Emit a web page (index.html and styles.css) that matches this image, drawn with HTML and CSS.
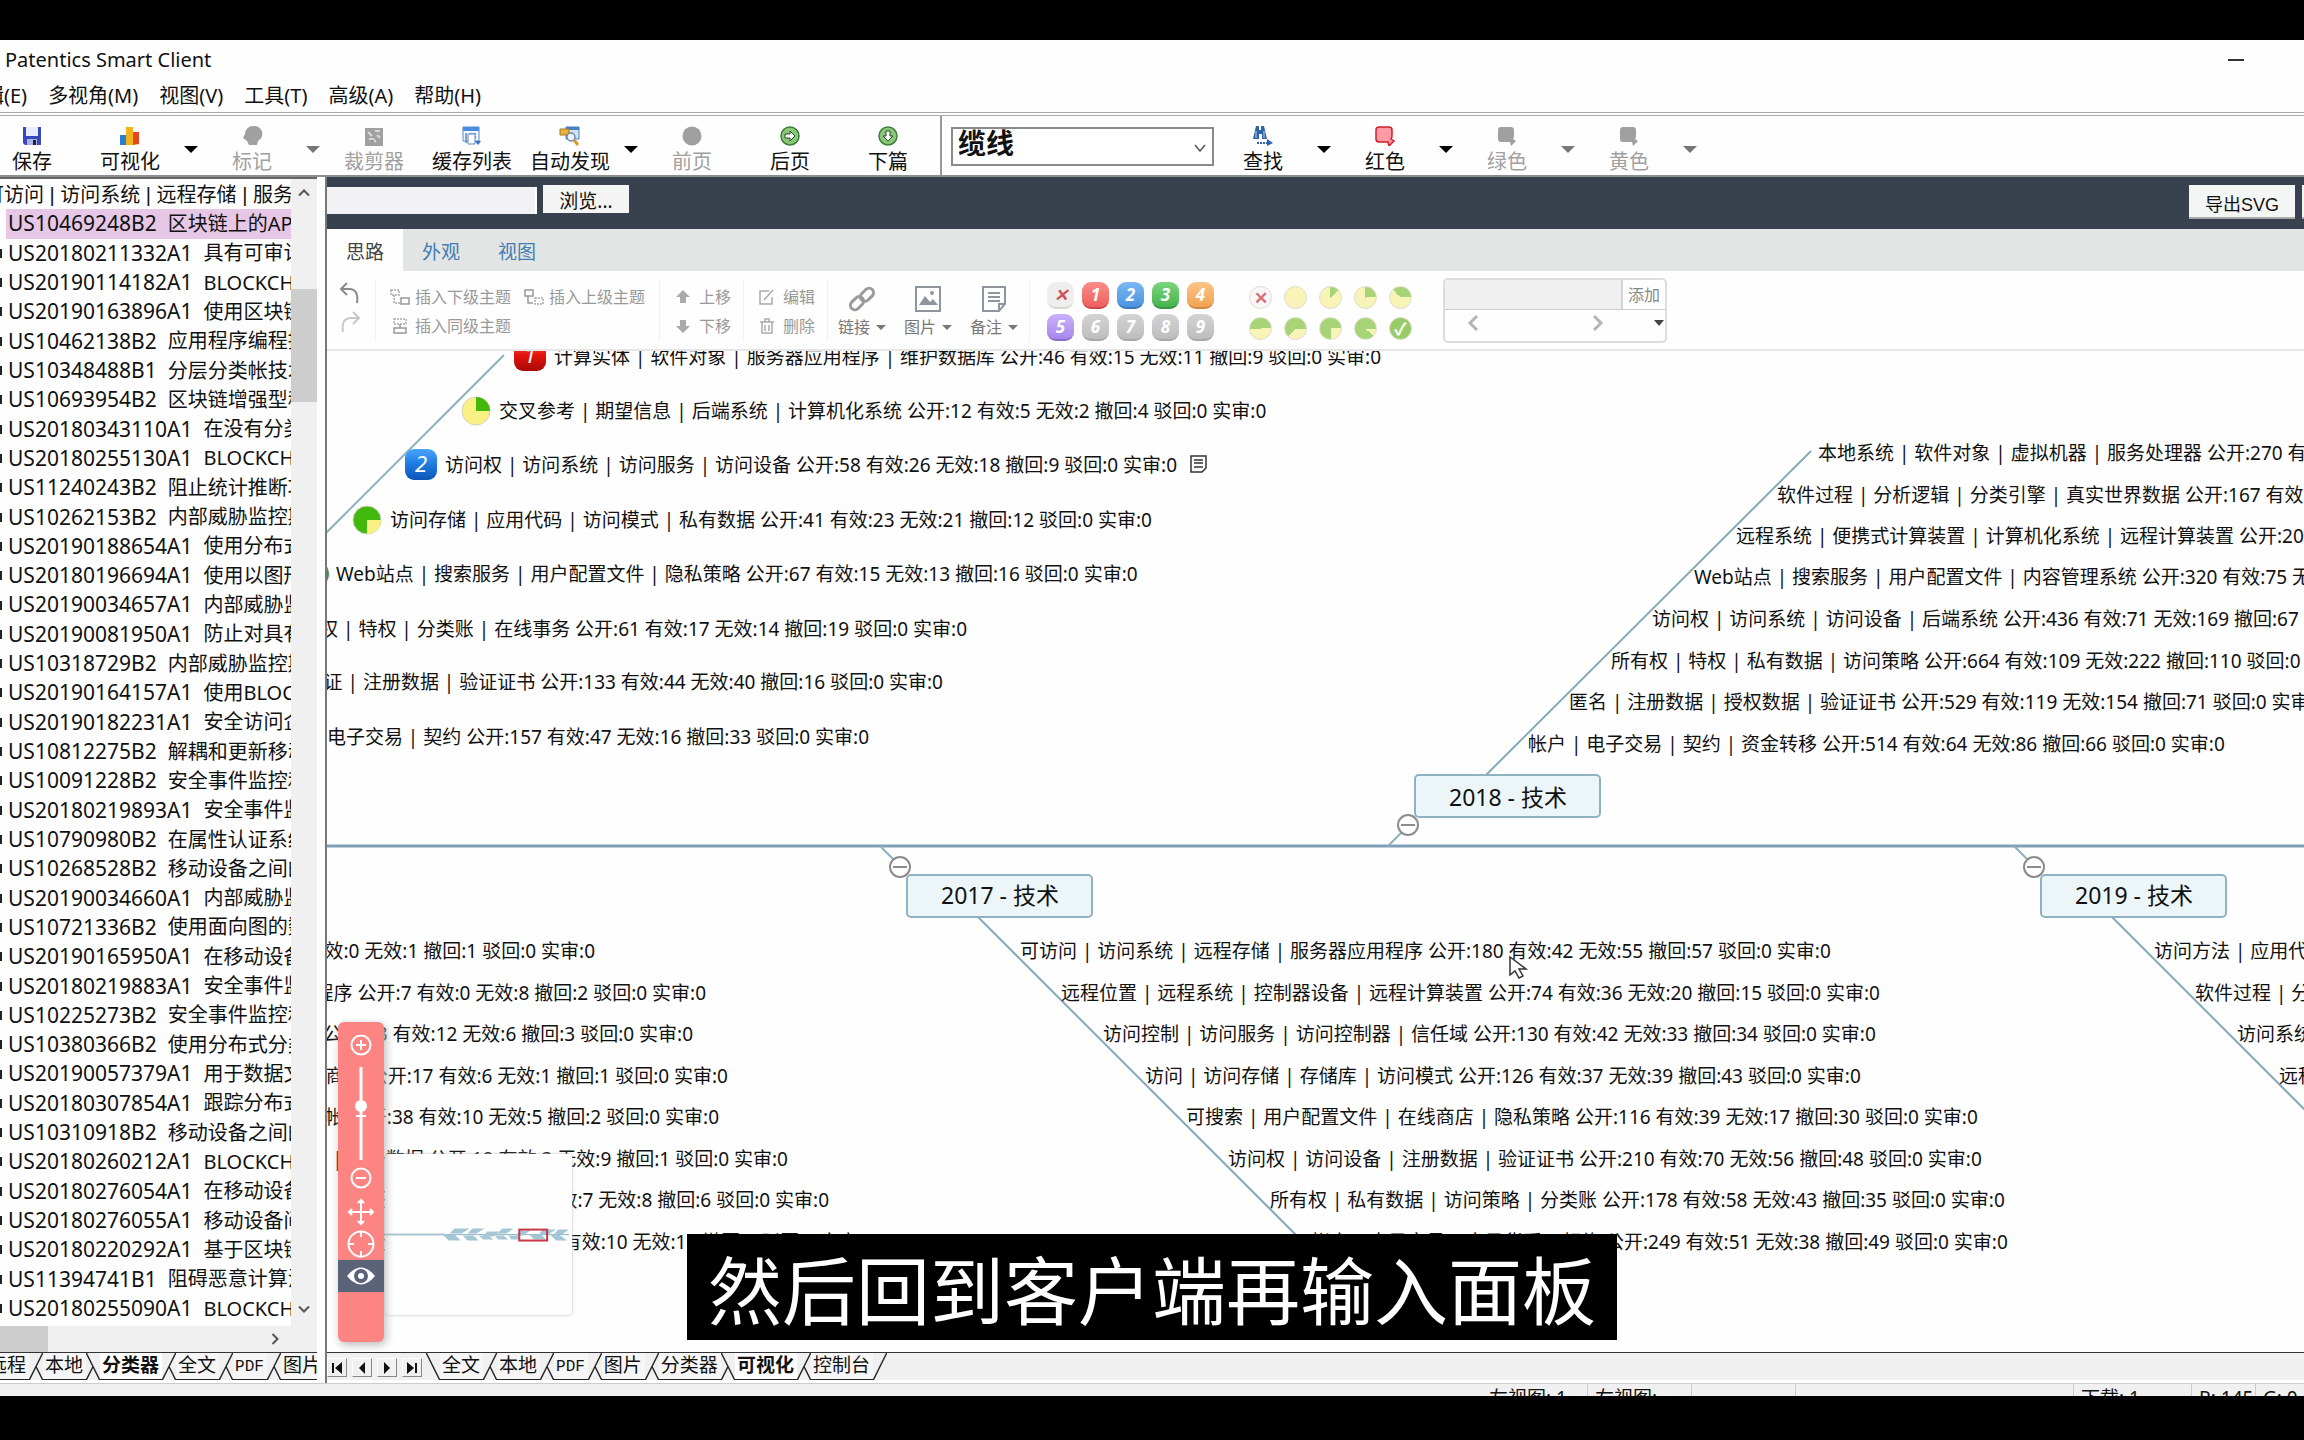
FILE: index.html
```html
<!DOCTYPE html>
<html lang="zh-CN">
<head>
<meta charset="utf-8">
<title>Patentics Smart Client</title>
<link rel="stylesheet" href="styles.css">
</head>
<body>
<svg class="defs" aria-hidden="true">
  <defs>
    <linearGradient id="gBlue" x1="0" y1="0" x2="0" y2="1"><stop offset="0" stop-color="#4aa3ff"/><stop offset=".5" stop-color="#1d7ae0"/><stop offset="1" stop-color="#0b57b5"/></linearGradient>
    <linearGradient id="gRed" x1="0" y1="0" x2="0" y2="1"><stop offset="0" stop-color="#ff5a4a"/><stop offset=".5" stop-color="#e3120b"/><stop offset="1" stop-color="#a80a08"/></linearGradient>
    <symbol id="speech" viewBox="0 0 20 20"><path d="M4 1h10q3 0 3 3v6q0 2-1 3l3 2-5 5-1-4H4q-3 0-3-3V4q0-3 3-3z"/></symbol>
    <symbol id="minus" viewBox="-11 -11 22 22"><circle r="10" fill="#fff" stroke="#8c8c8c" stroke-width="2"/><path d="M-7 0H7" stroke="#8c8c8c" stroke-width="2"/></symbol>
  </defs>
</svg>

<div class="app">
  <header class="titlebar">
    <h1>Patentics Smart Client</h1>
    <button class="minimize" aria-label="最小化"></button>
  </header>

  <nav class="menubar">
    <button>编辑(E)</button><button>多视角(M)</button><button>视图(V)</button><button>工具(T)</button><button>高级(A)</button><button>帮助(H)</button>
  </nav>

  <div class="toolbar">
    <button class="tool"><svg viewBox="0 0 20 20"><path d="M1 1h18v18H3l-2-2z" fill="#3a49b8"/><path d="M4 1h12v9H4z" fill="#e8ecff"/><path d="M5 13h10v6H5z" fill="#aab4e8"/><path d="M11 14h3v5h-3z" fill="#223"/></svg>保存</button>
    <button class="tool"><svg viewBox="0 0 20 20"><path d="M0 9h6v10H0z" fill="#2a7fd0"/><path d="M6 1h7v18H6z" fill="#f4b21c"/><path d="M13 6h6v12l-6 1z" fill="#e2481c"/></svg>可视化</button>
    <button class="drop" aria-label="可视化选项"></button>
    <button class="tool" disabled><svg viewBox="0 0 20 20"><path d="M11 0a8 8 0 0 1 5 15l-1 4H7l-2-4-4-3 2-4a8 8 0 0 1 8-8z" fill="#a0a0a0"/></svg>标记</button>
    <button class="drop" disabled aria-label="标记选项"></button>
    <button class="tool" disabled><svg viewBox="0 0 20 20"><path d="M1 2h18v18H1z" fill="#a0a0a0"/><path d="M4 6l4 4M11 5h5M5 13h4l3 3M13 9l3 3" stroke="#d8d8d8" stroke-width="2"/></svg>裁剪器</button>
    <button class="tool"><svg viewBox="0 0 20 20"><path d="M1 1h16v14H1z" fill="#f2f7ff" stroke="#5b86c8"/><path d="M1 1h16v4H1z" fill="#4b8ce0"/><path d="M4 7v10M7 8h7M7 11h7M7 14h6" stroke="#5b86c8" stroke-width="1.5"/><path d="M13 15h6l-3 4z" fill="#2b6fd0"/><path d="M6 8h7v10H6z" fill="#fff" stroke="#5b86c8"/></svg>缓存列表</button>
    <button class="tool"><svg viewBox="0 0 20 20"><path d="M6 1h13v12H6z" fill="#cfe3fa" stroke="#4b7fc4"/><path d="M6 1h13v3H6z" fill="#4b7fc4"/><path d="M0 3h9v6H0z" fill="#e8b23c" stroke="#a8761c"/><circle cx="11" cy="11" r="4" fill="#eaf4ff" stroke="#7088a8" stroke-width="1.5"/><path d="M14 14l4 5" stroke="#d89a28" stroke-width="3"/></svg>自动发现</button>
    <button class="drop" aria-label="自动发现选项"></button>
    <button class="tool" disabled><svg viewBox="0 0 20 20"><circle cx="10" cy="10" r="9.500" fill="#a0a0a0"/></svg>前页</button>
    <button class="tool"><svg viewBox="0 0 20 20"><circle cx="10" cy="10" r="9" fill="#8bc77a" stroke="#3f7f3a" stroke-width="1.5"/><path d="M5 8h5V5l5 5-5 5v-3H5z" fill="#fff" stroke="#234f20"/></svg>后页</button>
    <button class="tool"><svg viewBox="0 0 20 20"><circle cx="10" cy="10" r="9" fill="#8bc77a" stroke="#3f7f3a" stroke-width="1.5"/><path d="M8 5v5H5l5 5 5-5h-3V5z" fill="#fff" stroke="#234f20"/></svg>下篇</button>
    <div class="combo">
      <select aria-label="关键词"><option>缆线</option></select>
      <svg viewBox="0 0 12 8" aria-hidden="true"><path d="M1 1l5 6 5-6" fill="none" stroke="#555" stroke-width="1.5"/></svg>
    </div>
    <button class="tool"><svg viewBox="0 0 20 20"><path d="M3 0h3v4h2V0h3l3 13H9V8H6v5H0z" fill="#2f62a8"/><path d="M3 5v7M11 5v7" stroke="#b8d4f4"/><path d="M4 17h12" stroke="#2f62a8" stroke-width="2" stroke-dasharray="2 1"/><path d="M14 13l6 4-6 3z" fill="#2f62a8"/></svg>查找</button>
    <button class="drop" aria-label="查找选项"></button>
    <button class="tool"><svg viewBox="0 0 20 20" fill="#ff9aa4" stroke="#d0202c" stroke-width="1.500"><use href="#speech"/></svg>红色</button>
    <button class="drop" aria-label="红色选项"></button>
    <button class="tool" disabled><svg viewBox="0 0 20 20" fill="#a0a0a0"><use href="#speech"/></svg>绿色</button>
    <button class="drop" disabled aria-label="绿色选项"></button>
    <button class="tool" disabled><svg viewBox="0 0 20 20" fill="#a0a0a0"><use href="#speech"/></svg>黄色</button>
    <button class="drop" disabled aria-label="黄色选项"></button>
  </div>

  <div class="workspace">
    <aside class="sidebar">
      <div class="listpane">
        <ul class="patents">
          <li class="group">可访问 | 访问系统 | 远程存储 | 服务器</li>
          <li class="selected"><b>US10469248B2</b>区块链上的API</li>
          <li><b>US20180211332A1</b>具有可审计</li>
          <li><b>US20190114182A1</b>BLOCKCHAIN</li>
          <li><b>US20190163896A1</b>使用区块链</li>
          <li><b>US10462138B2</b>应用程序编程接</li>
          <li><b>US10348488B1</b>分层分类帐技术</li>
          <li><b>US10693954B2</b>区块链增强型移</li>
          <li><b>US20180343110A1</b>在没有分类</li>
          <li><b>US20180255130A1</b>BLOCKCHAIN</li>
          <li><b>US11240243B2</b>阻止统计推断攻</li>
          <li><b>US10262153B2</b>内部威胁监控期</li>
          <li><b>US20190188654A1</b>使用分布式</li>
          <li><b>US20180196694A1</b>使用以图形</li>
          <li><b>US20190034657A1</b>内部威胁监</li>
          <li><b>US20190081950A1</b>防止对具有</li>
          <li><b>US10318729B2</b>内部威胁监控期</li>
          <li><b>US20190164157A1</b>使用BLOCK</li>
          <li><b>US20190182231A1</b>安全访问企</li>
          <li><b>US10812275B2</b>解耦和更新移动</li>
          <li><b>US10091228B2</b>安全事件监控和</li>
          <li><b>US20180219893A1</b>安全事件监</li>
          <li><b>US10790980B2</b>在属性认证系统</li>
          <li><b>US10268528B2</b>移动设备之间的</li>
          <li><b>US20190034660A1</b>内部威胁监</li>
          <li><b>US10721336B2</b>使用面向图的数</li>
          <li><b>US20190165950A1</b>在移动设备</li>
          <li><b>US20180219883A1</b>安全事件监</li>
          <li><b>US10225273B2</b>安全事件监控和</li>
          <li><b>US10380366B2</b>使用分布式分类</li>
          <li><b>US20190057379A1</b>用于数据文</li>
          <li><b>US20180307854A1</b>跟踪分布式</li>
          <li><b>US10310918B2</b>移动设备之间的</li>
          <li><b>US20180260212A1</b>BLOCKCHAIN</li>
          <li><b>US20180276054A1</b>在移动设备</li>
          <li><b>US20180276055A1</b>移动设备间</li>
          <li><b>US20180220292A1</b>基于区块链</li>
          <li><b>US11394741B1</b>阻碍恶意计算活</li>
          <li><b>US20180255090A1</b>BLOCKCHAIN</li>
        </ul>
        <div class="vscroll">
          <svg viewBox="0 0 14 9"><path d="M2 7l5-5 5 5"/></svg>
          <div class="vthumb"></div>
          <svg viewBox="0 0 14 9"><path d="M2 2l5 5 5-5"/></svg>
        </div>
      </div>
      <div class="hscroll">
        <div class="hthumb"></div>
        <svg viewBox="0 0 9 14"><path d="M2 2l5 5-5 5"/></svg>
      </div>
      <div class="sheets sheets-left">
        <button>远程</button>
        <svg viewBox="0 0 14 28"><path d="M0 28L14 0M7 14l7 14"/></svg>
        <button>本地</button>
        <svg viewBox="0 0 14 28"><path d="M0 0l14 28M7 14L0 28"/></svg>
        <button class="on">分类器</button>
        <svg viewBox="0 0 14 28"><path d="M0 28L14 0M7 14l7 14"/></svg>
        <button>全文</button>
        <svg viewBox="0 0 14 28"><path d="M0 28L14 0M7 14l7 14"/></svg>
        <button class="latin">PDF</button>
        <svg viewBox="0 0 14 28"><path d="M0 28L14 0M7 14l7 14"/></svg>
        <button>图片</button>
      </div>
    </aside>

    <main class="main">
      <div class="filebar">
        <input type="text" class="filename" aria-label="文件">
        <button class="browse">浏览...</button>
        <div class="exports"><button class="export">导出SVG</button><button class="export">导出PNG</button></div>
      </div>

      <div class="tabs">
        <button class="on">思路</button><button>外观</button><button>视图</button>
      </div>

      <div class="ribbon">
        <div class="group history">
          <button aria-label="撤销"><svg width="22" height="22" viewBox="0 0 22 22"><path d="M8 1L2 7l6 6M2 7h8q10 0 8 14" fill="none" stroke="#8a8a8a" stroke-width="2"/></svg></button>
          <button aria-label="重做" disabled><svg width="22" height="22" viewBox="0 0 22 22"><path d="M14 1l6 6-6 6M20 7h-8Q2 7 4 21" fill="none" stroke="#c8c8c8" stroke-width="2"/></svg></button>
        </div>
        <div class="group insert">
          <button><svg viewBox="0 0 20 16"><path d="M1 1h8v5H1zM4 6v8h6" fill="none" stroke="#aaa" stroke-width="1.5" stroke-dasharray="2 1"/><path d="M11 9h8v6h-8z" fill="none" stroke="#999" stroke-width="1.5"/></svg>插入下级主题</button>
          <button><svg viewBox="0 0 20 16"><path d="M1 1h8v6H1zM4 7v7h5" fill="none" stroke="#999" stroke-width="1.5"/><path d="M11 9h8v6h-8z" fill="none" stroke="#aaa" stroke-width="1.5" stroke-dasharray="2 1"/></svg>插入上级主题</button>
          <button><svg viewBox="0 0 20 16"><path d="M4 1h12v5H4z" fill="none" stroke="#aaa" stroke-width="1.5" stroke-dasharray="2 1"/><path d="M10 6v4M4 10h12v5H4z" fill="none" stroke="#999" stroke-width="1.5"/></svg>插入同级主题</button>
        </div>
        <div class="group pair">
          <button><svg viewBox="0 0 16 16"><path d="M8 1l7 7h-4v6H5V8H1z" fill="#aaa"/></svg>上移</button>
          <button><svg viewBox="0 0 16 16"><path d="M8 15l7-7h-4V2H5v6H1z" fill="#aaa"/></svg>下移</button>
        </div>
        <div class="group pair">
          <button><svg viewBox="0 0 16 16"><path d="M10 2H1v13h12V8M5 11L14 1" fill="none" stroke="#aaa" stroke-width="1.5"/></svg>编辑</button>
          <button><svg viewBox="0 0 16 16"><path d="M1 4h14M6 4V1h4v3M3 4v11h10V4M6 7v6M10 7v6" fill="none" stroke="#aaa" stroke-width="1.5"/></svg>删除</button>
        </div>
        <div class="group attach">
          <button><svg viewBox="0 0 28 28"><g fill="none" stroke="#9a9a9a" stroke-width="3" transform="rotate(-45 14 14)"><rect x="0" y="9" width="15" height="9" rx="4.500"/><rect x="13" y="10" width="15" height="9" rx="4.500"/></g></svg><span>链接<i></i></span></button>
          <button><svg viewBox="0 0 28 28"><path d="M2 2h24v24H2z" fill="none" stroke="#8e959c" stroke-width="2"/><path d="M5 20l6-9 5 6 3-3 5 6z" fill="#8e959c"/><circle cx="18" cy="8" r="2" fill="#8e959c"/></svg><span>图片<i></i></span></button>
          <button><svg viewBox="0 0 28 28"><path d="M3 2h22v17l-6 7H3z" fill="none" stroke="#8e959c" stroke-width="2"/><path d="M8 8h12M8 12h12M8 16h12M19 26v-7h6" fill="none" stroke="#8e959c" stroke-width="2"/></svg><span>备注<i></i></span></button>
        </div>
        <div class="priority">
          <button class="none">✕</button><button class="p1">1</button><button class="p2">2</button><button class="p3">3</button><button class="p4">4</button>
          <button class="p5">5</button><button>6</button><button>7</button><button>8</button><button>9</button>
        </div>
        <div class="progress">
          <button class="clear">✕</button><button class="q0" aria-label="未开始"></button><button class="q1" aria-label="1/8"></button><button class="q2" aria-label="1/4"></button><button class="q3" aria-label="3/8"></button>
          <button class="q4" aria-label="1/2"></button><button class="q5" aria-label="5/8"></button><button class="q6" aria-label="3/4"></button><button class="q7" aria-label="7/8"></button><button class="done">✓</button>
        </div>
        <div class="tagbox">
          <div class="tagadd"><input type="text" aria-label="标签"><button>添加</button></div>
          <div class="tagnav">
            <svg viewBox="0 0 12 18"><path d="M10 2L3 9l7 7"/></svg>
            <svg viewBox="0 0 12 18"><path d="M2 2l7 7-7 7"/></svg>
            <i></i>
          </div>
        </div>
      </div>

      <section class="canvas">
        <svg class="map" width="100%" height="100%">
          <g transform="translate(-327 -351)">
            <g class="links">
              <path class="trunk" d="M320 846H2400"/>
              <path class="thin" d="M320 539L504 355M1388 846l14-14M880 846l14 14M2014 846l14 14"/>
              <path d="M1486 775L1811 451M978 917l330 330M2112 917l330 330"/>
            </g>

            <text x="554" y="364">计算实体 | 软件对象 | 服务器应用程序 | 维护数据库 公开:46 有效:15 无效:11 撤回:9 驳回:0 实审:0</text>
            <text x="499" y="418">交叉参考 | 期望信息 | 后端系统 | 计算机化系统 公开:12 有效:5 无效:2 撤回:4 驳回:0 实审:0</text>
            <text x="445" y="472">访问权 | 访问系统 | 访问服务 | 访问设备 公开:58 有效:26 无效:18 撤回:9 驳回:0 实审:0</text>
            <text x="390" y="527">访问存储 | 应用代码 | 访问模式 | 私有数据 公开:41 有效:23 无效:21 撤回:12 驳回:0 实审:0</text>
            <text x="336" y="581">Web站点 | 搜索服务 | 用户配置文件 | 隐私策略 公开:67 有效:15 无效:13 撤回:16 驳回:0 实审:0</text>
            <text class="end" x="967" y="636">所有权 | 特权 | 分类账 | 在线事务 公开:61 有效:17 无效:14 撤回:19 驳回:0 实审:0</text>
            <text class="end" x="943" y="689">认证 | 注册数据 | 验证证书 公开:133 有效:44 无效:40 撤回:16 驳回:0 实审:0</text>
            <text class="end" x="869" y="744">电子交易 | 契约 公开:157 有效:47 无效:16 撤回:33 驳回:0 实审:0</text>

            <text class="end" x="595" y="958">有效:0 无效:1 撤回:1 驳回:0 实审:0</text>
            <text class="end" x="706" y="1000">程序 公开:7 有效:0 无效:8 撤回:2 驳回:0 实审:0</text>
            <text class="end" x="693" y="1041">公开:23 有效:12 无效:6 撤回:3 驳回:0 实审:0</text>
            <text class="end" x="728" y="1083">商店 公开:17 有效:6 无效:1 撤回:1 驳回:0 实审:0</text>
            <text class="end" x="719" y="1124">帐 公开:38 有效:10 无效:5 撤回:2 驳回:0 实审:0</text>
            <text class="end" x="788" y="1166">| 注册数据 公开:18 有效:3 无效:9 撤回:1 驳回:0 实审:0</text>
            <text class="end" x="829" y="1207">信任 | 分类账 公开:28 有效:7 无效:8 撤回:6 驳回:0 实审:0</text>
            <text class="end" x="874" y="1249">行 | 电子交易 公开:31 有效:10 无效:10 撤回:9 驳回:0 实审:0</text>

            <text x="1818" y="460">本地系统 | 软件对象 | 虚拟机器 | 服务处理器 公开:270 有效:53 无效:61</text>
            <text x="1777" y="502">软件过程 | 分析逻辑 | 分类引擎 | 真实世界数据 公开:167 有效:32 无效:40</text>
            <text x="1736" y="543">远程系统 | 便携式计算装置 | 计算机化系统 | 远程计算装置 公开:200 有效:48</text>
            <text x="1694" y="584">Web站点 | 搜索服务 | 用户配置文件 | 内容管理系统 公开:320 有效:75 无效:90</text>
            <text x="1652" y="626">访问权 | 访问系统 | 访问设备 | 后端系统 公开:436 有效:71 无效:169 撤回:67 驳回:0 实审:0</text>
            <text x="1611" y="668">所有权 | 特权 | 私有数据 | 访问策略 公开:664 有效:109 无效:222 撤回:110 驳回:0 实审:0</text>
            <text x="1569" y="709">匿名 | 注册数据 | 授权数据 | 验证证书 公开:529 有效:119 无效:154 撤回:71 驳回:0 实审:0</text>
            <text x="1528" y="751">帐户 | 电子交易 | 契约 | 资金转移 公开:514 有效:64 无效:86 撤回:66 驳回:0 实审:0</text>

            <text x="1020" y="958">可访问 | 访问系统 | 远程存储 | 服务器应用程序 公开:180 有效:42 无效:55 撤回:57 驳回:0 实审:0</text>
            <text x="1061" y="1000">远程位置 | 远程系统 | 控制器设备 | 远程计算装置 公开:74 有效:36 无效:20 撤回:15 驳回:0 实审:0</text>
            <text x="1103" y="1041">访问控制 | 访问服务 | 访问控制器 | 信任域 公开:130 有效:42 无效:33 撤回:34 驳回:0 实审:0</text>
            <text x="1145" y="1083">访问 | 访问存储 | 存储库 | 访问模式 公开:126 有效:37 无效:39 撤回:43 驳回:0 实审:0</text>
            <text x="1186" y="1124">可搜索 | 用户配置文件 | 在线商店 | 隐私策略 公开:116 有效:39 无效:17 撤回:30 驳回:0 实审:0</text>
            <text x="1228" y="1166">访问权 | 访问设备 | 注册数据 | 验证证书 公开:210 有效:70 无效:56 撤回:48 驳回:0 实审:0</text>
            <text x="1270" y="1207">所有权 | 私有数据 | 访问策略 | 分类账 公开:178 有效:58 无效:43 撤回:35 驳回:0 实审:0</text>
            <text x="1311" y="1249">帐户 | 电子交易 | 电子货币 | 契约 公开:249 有效:51 无效:38 撤回:49 驳回:0 实审:0</text>

            <text x="2154" y="958">访问方法 | 应用代码 | 访问系统</text>
            <text x="2195" y="1000">软件过程 | 分析逻辑</text>
            <text x="2237" y="1041">访问系统 | 访问设备</text>
            <text x="2279" y="1083">远程系统</text>

            <g class="topics">
              <rect x="1415" y="775" width="185" height="42" rx="4"/>
              <rect x="907" y="875" width="185" height="42" rx="4"/>
              <rect x="2041" y="875" width="185" height="42" rx="4"/>
              <text x="1508" y="806">2018 - 技术</text>
              <text x="1000" y="904">2017 - 技术</text>
              <text x="2134" y="904">2019 - 技术</text>
            </g>
            <use href="#minus" x="1397" y="814" width="22" height="22"/>
            <use href="#minus" x="889" y="856" width="22" height="22"/>
            <use href="#minus" x="2023" y="856" width="22" height="22"/>

            <rect x="514" y="340" width="32" height="31" rx="9" fill="url(#gRed)"/>
            <text class="mark" x="530" y="363">1</text>
            <rect x="405" y="449" width="32" height="31" rx="9" fill="url(#gBlue)"/>
            <text class="mark" x="421" y="472">2</text>
            <circle cx="476" cy="411" r="14" fill="#f9f183" stroke="#d4d0c0"/>
            <path d="M476 411V397a14 14 0 0 1 14 14z" fill="#43b80c"/>
            <circle cx="367" cy="520" r="14" fill="#43b80c" stroke="#d4d0c0"/>
            <path d="M367 520h14a14 14 0 0 1-14 14z" fill="#f9f183"/>
            <circle cx="315" cy="574" r="14" fill="#2ea02e"/>
            <path d="M1191 456h15v12l-4 4h-11zM1194 460h9M1194 463h9M1194 467h9" fill="none" stroke="#333" stroke-width="1.500"/>
            <path d="M1510 957v18l5-4 4 7 4-2-4-7h7z" fill="#fff" stroke="#333" stroke-width="1.500"/>
          </g>
        </svg>

        <div class="preview">
          <svg viewBox="0 0 188 160">
            <path d="M0 81H60" stroke="#a9c6d2" stroke-width="2"/><path d="M60 81h125" stroke="#8fb6c6"/>
            <g fill="#a4c6d5">
              <path d="M70 75h15l-8 5H65zM88 75h12l-8 5h-9zM103 78h12l-6 5H98zM118 75h11l-7 5h-9zM136 77h10l-7 5h-8zM158 76h14l-8 5h-9zM174 76h11l-7 5h-8z"/>
              <path d="M58 81h12l6 6H64zM78 82h11l5 5H83zM94 82h10l5 4H99zM110 82h9l5 4h-10zM124 82h9l3 4h-9zM145 81h12l5 5h-12zM166 81h9l8 6h-11z"/>
            </g>
            <rect x="135" y="76" width="28" height="11" fill="none" stroke="#c9384a" stroke-width="2"/>
          </svg>
        </div>
        <div class="navigator">
          <svg viewBox="0 0 46 320">
            <g fill="none" stroke="#fff" stroke-width="2">
              <circle cx="23" cy="23" r="9.500"/><path d="M18 23h10M23 18v10"/>
              <path d="M23 45v93" stroke-width="3"/><path d="M18 94h10"/>
              <circle cx="23" cy="156" r="9.500"/><path d="M18 156h10"/>
              <path d="M11 190h24M23 178v24M14 187l-3 3 3 3M32 187l3 3-3 3M20 181l3-3 3 3M20 199l3 3 3-3"/>
              <circle cx="23" cy="222" r="12.500"/><path d="M23 209v6M23 229v6M10 222h6M30 222h6"/>
            </g>
            <circle cx="23" cy="84" r="6" fill="#fff"/>
            <path d="M0 238h46v32H0z" fill="#5a6378"/>
            <path d="M9 254q14-17 28 0-14 17-28 0z" fill="#fff"/>
            <circle cx="23" cy="254" r="5" fill="#fff" stroke="#5a6378" stroke-width="4"/>
          </svg>
        </div>
      </section>

      <div class="sheets sheets-right">
        <div class="steps">
          <button aria-label="第一页"><svg viewBox="0 0 12 12"><path d="M1 1h2v10H1zM11 0v12L4 6z"/></svg></button>
          <button aria-label="上一页"><svg viewBox="0 0 12 12"><path d="M9 0v12L3 6z"/></svg></button>
          <button aria-label="下一页"><svg viewBox="0 0 12 12"><path d="M3 0v12l6-6z"/></svg></button>
          <button aria-label="最后一页"><svg viewBox="0 0 12 12"><path d="M9 1h2v10H9zM1 0v12l7-6z"/></svg></button>
        </div>
        <svg viewBox="0 0 14 28"><path d="M0 0l14 28"/></svg>
        <button>全文</button>
        <svg viewBox="0 0 14 28"><path d="M0 28L14 0M7 14l7 14"/></svg>
        <button>本地</button>
        <svg viewBox="0 0 14 28"><path d="M0 28L14 0M7 14l7 14"/></svg>
        <button class="latin">PDF</button>
        <svg viewBox="0 0 14 28"><path d="M0 28L14 0M7 14l7 14"/></svg>
        <button>图片</button>
        <svg viewBox="0 0 14 28"><path d="M0 28L14 0M7 14l7 14"/></svg>
        <button>分类器</button>
        <svg viewBox="0 0 14 28"><path d="M0 0l14 28M7 14L0 28"/></svg>
        <button class="on">可视化</button>
        <svg viewBox="0 0 14 28"><path d="M0 28L14 0M7 14l7 14"/></svg>
        <button>控制台</button>
        <svg viewBox="0 0 14 28"><path d="M0 28L14 0"/></svg>
      </div>
    </main>
  </div>

  <footer class="status">
    <span class="views">左视图: 1</span><span class="pane">右视图:</span><span class="pane"></span><span class="blank"></span><span class="down">下载: 1</span><span class="rgb">R: 145</span><span class="rgb2">G: 0</span>
  </footer>
</div>

<p class="subtitle">然后回到客户端再输入面板</p>
</body>
</html>
```
FILE: styles.css
```css
* { box-sizing: border-box; }

body {
  margin: 0;
  height: 100vh;
  padding: 40px 0 44px;
  background: #000;
  color: #111;
  font: 20px/1.2 "Noto Sans", "Noto Sans CJK SC", sans-serif;
  overflow: hidden;
}

button, input, select { font: inherit; color: inherit; margin: 0; padding: 0; border: 0; border-radius: 0; background: none; }
.defs { position: absolute; width: 0; height: 0; }

.app { display: flex; flex-direction: column; height: 100%; background: #fefefe; overflow: hidden; }

.titlebar { display: flex; flex: none; justify-content: space-between; align-items: center; height: 39px; padding: 0 60px 0 5px; }
.titlebar h1 { margin: 0; font-size: 20px; font-weight: 400; }
.minimize { width: 16px; height: 2px; background: #333; }

.menubar { display: flex; flex: none; gap: 21px; height: 33px; margin-left: -36px; align-items: center; white-space: nowrap; }
.menubar button { flex: none; }

.toolbar { display: flex; flex: none; height: 65px; border-top: 4px double #aaa; border-bottom: 2px solid #8c8f90; overflow: hidden; }
.tool { display: flex; flex: none; flex-direction: column; align-items: center; width: 98px; padding-top: 10px; gap: 4px; line-height: 24px; white-space: nowrap; }
.tool:first-child { margin-left: -17px; }
.tool svg { width: 20px; height: 20px; overflow: visible; }
.tool:disabled { color: #a0a0a0; }
.drop { flex: none; width: 24px; }
.drop::before { content: ""; display: block; width: 0; margin: 8px auto 0; border: 7px solid transparent; border-top-color: #000; border-bottom: 0; }
.drop:disabled::before { border-top-color: #777; }
.combo { position: relative; flex: none; margin-left: 3px; padding: 11px 0 0 9px; border-left: 2px solid #999; }
.combo select { display: block; width: 263px; height: 39px; padding: 0 5px 8px; border: 2px solid #8a8a8a; background: #fff; appearance: none; font-size: 28px; font-weight: 700; line-height: 28px; }
.combo svg { position: absolute; right: 8px; top: 28px; width: 12px; height: 8px; }

.workspace { display: flex; flex: 1; min-height: 0; }
.sidebar { display: flex; flex: none; flex-direction: column; width: 317px; border-top: 2px solid #666; padding-bottom: 3px; overflow: hidden; }
.listpane { display: flex; flex: 1; min-height: 0; }
.patents { display: flex; flex: 1; flex-direction: column; min-width: 0; margin: 0; padding: 1px 0 3px; list-style: none; overflow: hidden; white-space: nowrap; }
.patents li { display: flex; flex: 1; min-height: 0; align-items: center; gap: 11px; padding-left: 8px; background: linear-gradient(#222, #222) 0 50% / 2px 9px no-repeat; }
.patents b { font-weight: 400; font-size: 21px; }
.patents .group { margin-left: -24px; background: none; font-family: "Liberation Sans", "Noto Sans CJK SC", sans-serif; }
.patents .selected { background: linear-gradient(90deg, #fefefe 6px, #e6c7e6 6px); }
.vscroll { display: flex; flex: none; flex-direction: column; align-items: center; width: 26px; padding: 7px 0 10px; background: #f0f0f0; }
.vscroll svg, .hscroll svg { width: 14px; height: 14px; fill: none; stroke: #555; stroke-width: 2; }
.vthumb { flex: none; width: 26px; height: 113px; margin: 89px 0 auto; background: #cdcdcd; }
.hscroll { display: flex; flex: none; justify-content: space-between; align-items: center; height: 26px; padding-right: 35px; background: #f0f0f0; }
.hthumb { width: 48px; height: 26px; background: #cdcdcd; }

.sheets { display: flex; flex: none; height: 28px; background: #f0f0f0; border-top: 1px solid #333; font: 19px/28px "Liberation Mono", "Noto Sans CJK SC", monospace; overflow: hidden; }
.sheets > button { flex: none; padding: 0 3px 0 2px; border-bottom: 1px solid #222; background: #f6f6f6; white-space: nowrap; }
.sheets > button.on { background: #fff; font-weight: 700; }
.sheets > button.latin { font-size: 16px; }
.sheets > svg { flex: none; width: 14px; height: 27px; fill: none; stroke: #222; stroke-width: 1.5; }
.sheets-left > :first-child { margin-left: -14px; }
.steps { display: flex; gap: 5px; width: 99px; padding: 5px 0 3px; }
.steps button { display: flex; align-items: center; justify-content: center; width: 20px; border: 1px solid; border-color: #fff #888 #888 #fff; }
.steps svg { width: 12px; height: 12px; fill: #111; }

.main { display: flex; flex: 1; flex-direction: column; min-width: 0; margin-left: 8px; border-left: 2px solid #777; padding-bottom: 3px; background: #fefefe; }
.filebar { display: flex; flex: none; align-items: flex-start; height: 52px; padding-top: 8px; background: #38414e; overflow: hidden; }
.filename { width: 210px; height: 27px; margin: 2px 6px 0 0; background: #f2f2f4; border-right: 2px solid #fff; }
.browse { width: 86px; height: 28px; background: #f4f4f4; font-size: 19px; line-height: 28px; padding-top: 2px; }
.exports { display: flex; gap: 7px; margin: 0 -104px 0 auto; }
.export { width: 106px; height: 34px; padding-top: 8px; background: #f4f6f6; border-bottom: 2px solid #aaa; font: 18px/24px "Liberation Sans", "Noto Sans CJK SC", sans-serif; }

.tabs { display: flex; flex: none; height: 42px; background: #e3e4e4; font-size: 19px; color: #3f7fb5; }
.tabs button { width: 76px; line-height: 42px; padding: 2px 0 0; }
.tabs .on { background: #fefefe; color: #444; }

.ribbon { display: flex; flex: none; height: 80px; border-bottom: 2px solid #e6e6e6; font-size: 16px; line-height: 20px; color: #999; }
.ribbon button { white-space: nowrap; }
.group { display: flex; }
.ribbon > .group { flex: none; border-right: 1px solid #f2f2f2; margin: 8px 0; padding-top: 3px; }
.ribbon .history { flex-direction: column; width: 49px; padding-left: 12px; gap: 7px; align-items: flex-start; }
.history svg { display: block; }
.insert { flex-wrap: wrap; align-content: flex-start; width: 284px; padding-left: 14px; column-gap: 13px; }
.insert button, .pair button { display: flex; align-items: center; gap: 5px; height: 29px; }
.insert svg { width: 20px; height: 16px; }
.pair { flex-direction: column; align-items: flex-start; width: 84px; padding-left: 15px; }
.pair button { gap: 8px; }
.pair svg { width: 16px; height: 16px; }
.attach { width: 202px; padding-left: 10px; gap: 18px; align-items: flex-start; color: #777; }
.attach button { display: flex; flex-direction: column; align-items: center; gap: 4px; padding-top: 3px; }
.attach svg { width: 28px; height: 28px; }
.attach span { display: flex; align-items: center; gap: 6px; }
.attach i { border: 5px solid transparent; border-top-color: #777; border-bottom: 0; }
.priority { display: grid; flex: none; grid-template-columns: repeat(5, 27px); gap: 5px 8px; align-content: start; margin-left: 17px; padding-top: 11px; }
.priority button { height: 27px; border-radius: 9px; background: linear-gradient(#d4d4d4, #bdbdbd); border-bottom: 2px solid #a8a8a8; color: #fff; font-weight: 700; font-style: italic; font-size: 17px; line-height: 24px; }
.priority .none { background: #f0eeec; color: #d05058; border-color: #d8d4d0; }
.priority .p1 { background: linear-gradient(#fa8c86, #ee6060); border-color: #c84a4a; }
.priority .p2 { background: linear-gradient(#7cb8f4, #4c94e0); border-color: #3a78bc; }
.priority .p3 { background: linear-gradient(#7cd47c, #46b44e); border-color: #38943e; }
.priority .p4 { background: linear-gradient(#fcc488, #f2a252); border-color: #cc8844; }
.priority .p5 { background: linear-gradient(#c8b0fc, #a888ec); border-color: #8a6cc8; }
.progress { display: grid; flex: none; grid-template-columns: repeat(5, 23px); gap: 8px 12px; align-content: start; margin-left: 35px; padding-top: 15px; }
.progress button { height: 23px; border-radius: 50%; border: 1px solid #e0dccc; background: #f8f4b8; font-size: 17px; line-height: 20px; font-weight: 700; }
.progress .clear { background: #f8f6f6; color: #d87078; }
.progress .q1 { background: conic-gradient(#a8d478 45deg, #f8f4b8 0); }
.progress .q2 { background: conic-gradient(#a8d478 90deg, #f8f4b8 0); }
.progress .q3 { background: conic-gradient(from -45deg, #a8d478 135deg, #f8f4b8 0); }
.progress .q4 { background: conic-gradient(from -90deg, #a8d478 180deg, #f8f4b8 0); }
.progress .q5 { background: conic-gradient(from -135deg, #a8d478 225deg, #f8f4b8 0); }
.progress .q6 { background: conic-gradient(from 180deg, #a8d478 270deg, #f8f4b8 0); }
.progress .q7 { background: conic-gradient(from 135deg, #a8d478 315deg, #f8f4b8 0); }
.progress .done { background: #98cc68; color: #fff; }
.tagbox { flex: none; width: 224px; height: 65px; margin: 7px 0 0 31px; border: 2px solid #ddd; border-radius: 5px; overflow: hidden; }
.tagadd { display: flex; height: 30px; border-bottom: 1px solid #ccc; }
.tagadd input { flex: 1; min-width: 0; background: #f0f0f0; border-right: 2px solid #d4d4d4; }
.tagadd button { width: 42px; color: #888; }
.tagnav { display: flex; align-items: center; padding: 4px 0 0 22px; }
.tagnav svg { width: 12px; height: 18px; fill: none; stroke: #b4b4b4; stroke-width: 3; }
.tagnav svg + svg { margin-left: 113px; }
.tagnav i { margin-left: auto; border: 5px solid transparent; border-top: 6px solid #444; border-bottom: 0; margin-right: 1px; }

.canvas { position: relative; flex: 1; min-height: 0; overflow: hidden; }
.map { display: block; font-size: 19px; fill: #111; }
.map .end { text-anchor: end; }
.links { fill: none; stroke: #86a9b8; stroke-width: 2; }
.links .thin { stroke: #8fb0c0; }
.links .trunk { stroke: #7f9fb6; stroke-width: 3; }
.topics rect { fill: #ecf5f8; stroke: #8fb2c2; stroke-width: 2; }
.topics text { font-size: 23px; text-anchor: middle; }
.map .mark { fill: #fff; font-size: 22px; font-style: italic; text-anchor: middle; }

.preview { position: absolute; left: 58px; bottom: 37px; width: 187px; height: 161px; background: #fefefe; border-radius: 4px; box-shadow: 0 0 3px #bbb; }
.navigator { position: absolute; left: 11px; bottom: 10px; width: 46px; height: 320px; border-radius: 6px; background: #fc8584; box-shadow: 2px 3px 8px #bbb; overflow: hidden; }
.preview svg, .navigator svg { display: block; width: 100%; }

.status { display: flex; flex: none; height: 13px; background: #f0f0f0; border-top: 1px solid #ccc; font-size: 19px; line-height: 28px; white-space: nowrap; overflow: hidden; }
.status span { flex: none; padding-left: 7px; border-left: 1px solid #ccc; }
.status .views { margin-left: auto; width: 105px; border-left: 0; }
.status .pane { width: 104px; }
.status .blank { width: 278px; }
.status .down { width: 118px; }
.status .rgb { width: 64px; }
.status .rgb2 { width: 49px; }

.subtitle { position: absolute; left: 0; right: 0; bottom: 100px; width: fit-content; margin: 0 auto; padding: 0 21px; background: #000; color: #fff; font: 74px/106px "Noto Sans CJK SC", sans-serif; }
```
